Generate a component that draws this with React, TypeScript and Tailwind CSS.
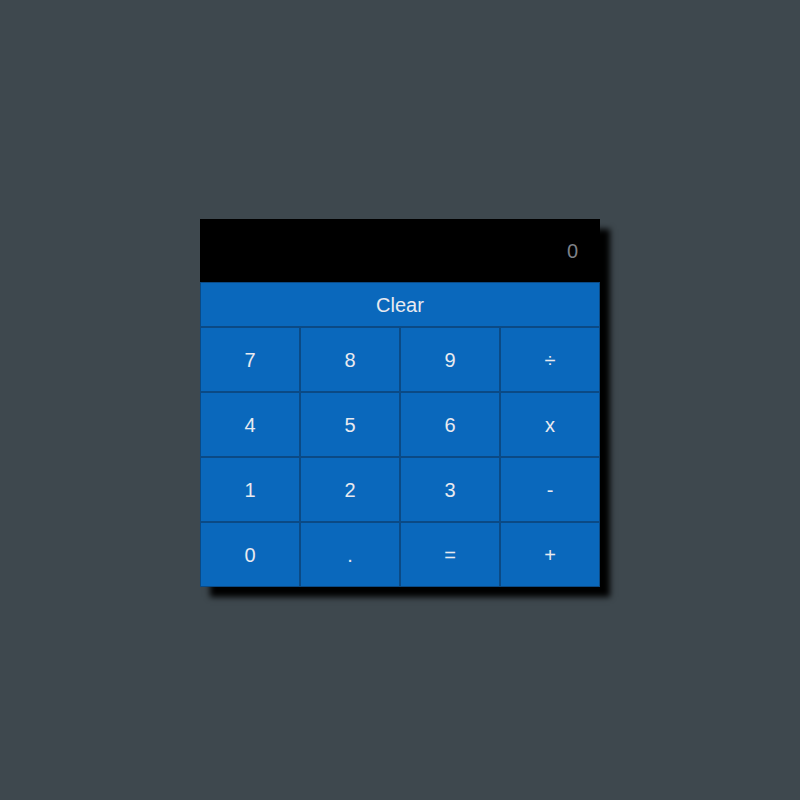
const keys = ['7', '8', '9', '÷', '4', '5', '6', 'x', '1', '2', '3', '-', '0', '.', '=', '+']

const App = () => {
    return (
        <div className="min-h-[800px] w-full bg-[#3e484e] flex items-center justify-center font-['Liberation_Sans',Arial,sans-serif]">
            <div className="w-[400px] shadow-[10px_10px_6px_#000] mt-[6px]">
                {/* display */}
                <div className="h-[63px] bg-black flex items-center justify-end pr-[22px] text-[20px] text-[#7d8188]">0</div>
                {/* clear */}
                <div className="h-[45px] bg-[#0a68bc] border border-[#0b4a85] flex items-center justify-center text-[20px] text-[#e8eaf0]">Clear</div>
                {/* keys */}
                <div className="grid grid-cols-4">
                    {keys.map((k) => (
                        <div key={k} className="h-[65px] bg-[#0a68bc] border border-[#0b4a85] flex items-center justify-center text-[20px] text-[#e8eaf0]">
                            {k}
                        </div>
                    ))}
                </div>
            </div>
        </div>
    )
}

export default App
